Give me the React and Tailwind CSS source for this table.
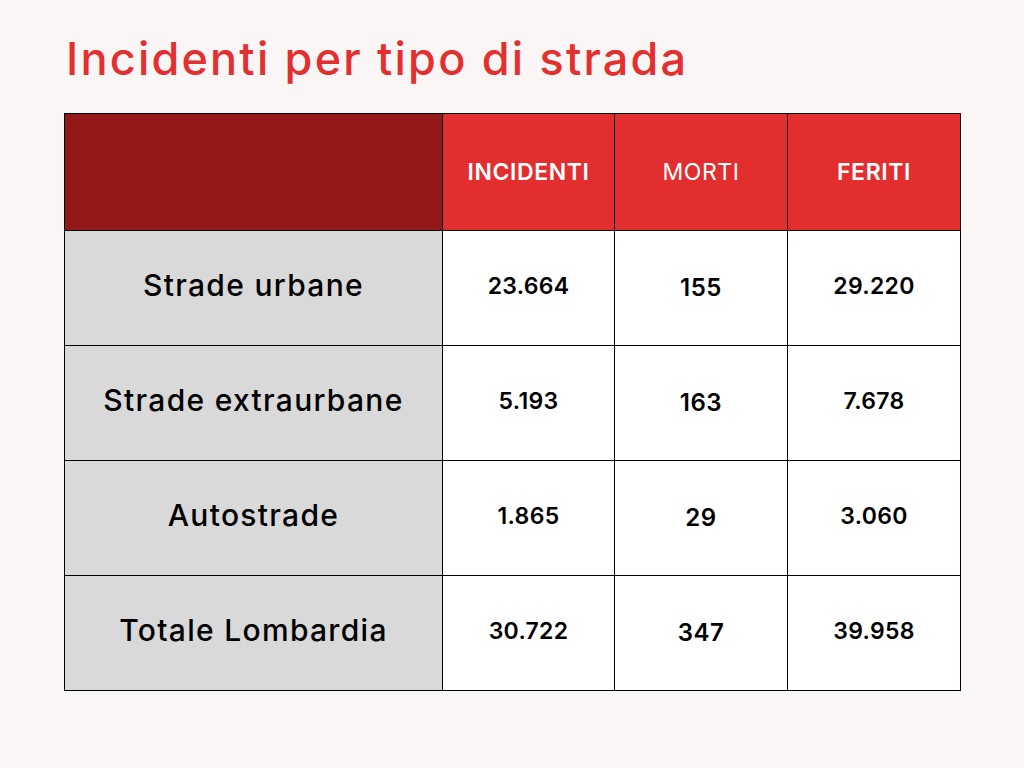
import React from "react";

const rows = [
  { label: "Strade urbane", incidenti: "23.664", morti: "155", feriti: "29.220" },
  { label: "Strade extraurbane", incidenti: "5.193", morti: "163", feriti: "7.678" },
  { label: "Autostrade", incidenti: "1.865", morti: "29", feriti: "3.060" },
  { label: "Totale Lombardia", incidenti: "30.722", morti: "347", feriti: "39.958" },
];

const cell = "flex items-center justify-center border-r border-b border-black";

const App = () => {
  return (
    <div
      className="min-h-[768px] w-full bg-[#faf6f5] px-[64px] pt-[36px]"
      style={{ fontFamily: "Inter, 'Noto Sans', sans-serif" }}
    >
      <h1 className="pl-[2px] text-[45px] font-medium leading-none tracking-[2.2px] text-[#e32f2f]">
        Incidenti per tipo di strada
      </h1>

      <div className="mt-[32px] grid w-[897px] grid-cols-[378px_172px_173px_173px] grid-rows-[117px_115px_115px_115px_115px] border-l border-t border-black">
        <div className={`${cell} bg-[#931818]`}></div>
        <div className={`${cell} bg-[#e22e2f] text-[23px] font-semibold tracking-[0.6px] text-white`}>
          INCIDENTI
        </div>
        <div className={`${cell} bg-[#e22e2f] text-[23px] font-normal tracking-[0.6px] text-white`}>
          MORTI
        </div>
        <div className={`${cell} bg-[#e22e2f] text-[23px] font-semibold tracking-[0.6px] text-white`}>
          FERITI
        </div>

        {rows.map((r) => (
          <React.Fragment key={r.label}>
            <div
              className={`${cell} bg-[#d9d9d9] pb-[6px] text-[30px] font-medium tracking-[1.3px] text-black`}
            >
              {r.label}
            </div>
            <div className={`${cell} bg-white pb-[4px] text-[23px] font-semibold tracking-[0.3px] text-black`}>
              {r.incidenti}
            </div>
            <div className={`${cell} bg-white text-[24px] font-semibold tracking-[0.5px] text-black`}>
              {r.morti}
            </div>
            <div className={`${cell} bg-white pb-[4px] text-[23px] font-semibold tracking-[0.3px] text-black`}>
              {r.feriti}
            </div>
          </React.Fragment>
        ))}
      </div>
    </div>
  );
};

export default App;
